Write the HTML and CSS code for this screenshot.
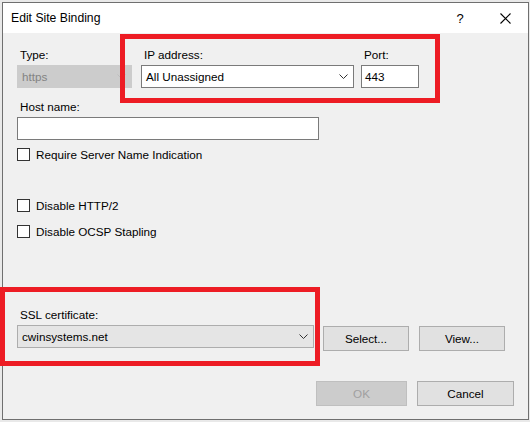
FILE: index.html
```html
<!DOCTYPE html>
<html>
<head>
<meta charset="utf-8">
<link rel="stylesheet" href="styles.css">
</head>
<body>
<div class="screen">
  <div class="dialog">
    <div class="titlebar">
      <span class="title">Edit Site Binding</span>
      <span class="help">?</span>
      <span class="close">
        <svg width="11" height="11" viewBox="0 0 11 11"><path d="M0.5 0.5 L10.5 10.5 M10.5 0.5 L0.5 10.5" stroke="#000" stroke-width="1.1" fill="none"/></svg>
      </span>
    </div>
    <div class="content">
      <div class="row1">
        <div class="field">
          <div class="label">Type:</div>
          <div class="combo combo-disabled w-type">
            <span class="val">https</span>
            <svg class="chev" width="9" height="5" viewBox="0 0 9 5"><path d="M0.5 0.5 L4.5 4.5 L8.5 0.5" stroke="#bdbdbd" fill="none"/></svg>
          </div>
        </div>
        <div class="field">
          <div class="label">IP address:</div>
          <div class="combo combo-white w-ip">
            <span class="val">All Unassigned</span>
            <svg class="chev" width="9" height="5" viewBox="0 0 9 5"><path d="M0.5 0.5 L4.5 4.5 L8.5 0.5" stroke="#333" fill="none"/></svg>
          </div>
        </div>
        <div class="field">
          <div class="label">Port:</div>
          <div class="textbox w-port"><span class="val">443</span></div>
        </div>
      </div>
      <div class="field host">
        <div class="label">Host name:</div>
        <div class="textbox w-host"></div>
      </div>
      <div class="check cb1"><span class="box"></span><span>Require Server Name Indication</span></div>
      <div class="check cb2"><span class="box"></span><span>Disable HTTP/2</span></div>
      <div class="check cb3"><span class="box"></span><span>Disable OCSP Stapling</span></div>
      <div class="ssl-row">
        <div class="field">
          <div class="label">SSL certificate:</div>
          <div class="combo combo-gray w-ssl">
            <span class="val">cwinsystems.net</span>
            <svg class="chev" width="9" height="5" viewBox="0 0 9 5"><path d="M0.5 0.5 L4.5 4.5 L8.5 0.5" stroke="#333" fill="none"/></svg>
          </div>
        </div>
        <div class="btn w-select">Select...</div>
        <div class="btn w-view">View...</div>
      </div>
      <div class="actions">
        <div class="btn btn-disabled w-ok">OK</div>
        <div class="btn w-cancel">Cancel</div>
      </div>
    </div>
  </div>
  <div class="mark mark-ip"></div>
  <div class="mark mark-ssl"></div>
</div>
</body>
</html>
```

FILE: styles.css
```css
* { box-sizing: border-box; }
html, body { margin: 0; padding: 0; }
body {
  font-family: "Liberation Sans", Arial, sans-serif;
  font-size: 11.7px;
  color: #000;
  background: #ececec;
}
.screen {
  position: relative;
  width: 530px;
  height: 422px;
  overflow: hidden;
  background: #e9e9e9;
  padding: 2px 0 0 2px;
}
.dialog {
  width: 527px;
  height: 418px;
  border: 1px solid #6f6f6f;
  background: #f0f0f0;
  display: flex;
  flex-direction: column;
}
.titlebar {
  height: 30px;
  background: #fff;
  display: flex;
  align-items: center;
  padding-left: 8px;
  flex: none;
}
.title { font-size: 12.2px; flex: 1; }
.help { font-size: 13px; width: 12px; margin-right: 34px; text-align: center; }
.close { width: 11px; height: 11px; margin-right: 17px; display: flex; }
.content {
  padding: 14px 14px 0 14px;
  display: flex;
  flex-direction: column;
}
.row1 { display: flex; gap: 9px; }
.row1 .field:last-child { margin-left: -2px; }
.field { display: flex; flex-direction: column; }
.label { height: 16px; line-height: 16px; margin-bottom: 2px; padding-left: 3px; }
.combo, .textbox {
  height: 23px;
  display: flex;
  align-items: center;
  padding-left: 4px;
  border: 1px solid #7a7a7a;
  background: #fff;
  position: relative;
}
.combo .val { flex: 1; }
.chev { margin-right: 5px; }
.combo-disabled { background: #cccccc; border-color: #cccccc; color: #838383; }
.combo-white { background: #fff; border-color: #7a7a7a; }
.combo-gray { background: #e5e5e5; border-color: #adadad; }
.textbox { padding-left: 3px; }
.w-type { width: 115px; }
.w-ip { width: 213px; }
.w-port { width: 58px; }
.host { margin-top: 11px; }
.w-host { width: 302px; }
.check { display: flex; align-items: center; height: 13px; }
.check .box {
  width: 13px; height: 13px;
  border: 1px solid #333;
  background: #fff;
  margin-right: 6px;
}
.cb1 { margin-top: 8px; }
.cb2 { margin-top: 38px; }
.cb3 { margin-top: 13px; }
.ssl-row { display: flex; margin-top: 69px; }
.ssl-row .label { margin-bottom: 2px; }
.w-ssl { width: 297px; }
.btn {
  height: 25px;
  border: 1px solid #adadad;
  background: #e1e1e1;
  display: flex;
  align-items: center;
  justify-content: center;
}
.btn-disabled { background: #cccccc; border-color: #bfbfbf; color: #a0a0a0; }
.w-select { width: 86px; margin-left: 9px; margin-top: 19px; }
.w-view { width: 86px; margin-left: 10px; margin-top: 19px; }
.actions { display: flex; justify-content: flex-end; gap: 10px; margin-top: 30px; }
.w-ok { width: 91px; }
.w-cancel { width: 97px; }
.mark {
  position: absolute;
  border: 5px solid #ed1c24;
}
.mark-ip { left: 120px; top: 34px; width: 320px; height: 69px; }
.mark-ssl { left: 0; top: 287px; width: 320px; height: 79px; }
```
